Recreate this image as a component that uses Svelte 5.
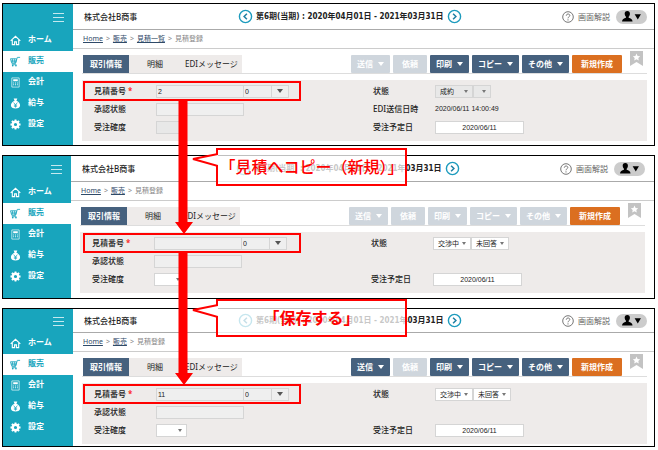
<script>
  const nav = [
    { icon: 'home', label: 'ホーム' },
    { icon: 'cart', label: '販売', current: true },
    { icon: 'calc', label: '会計' },
    { icon: 'pay', label: '給与' },
    { icon: 'gear', label: '設定' }
  ];

  const actions = [
    { key: 'send', label: '送信', caret: true },
    { key: 'request', label: '依頼' },
    { key: 'print', label: '印刷', caret: true },
    { key: 'copy', label: 'コピー', caret: true },
    { key: 'other', label: 'その他', caret: true },
    { key: 'new', label: '新規作成' }
  ];

  const steps = [
    {
      id: 's1',
      crumbs: ['Home', '販売', '見積一覧'],
      off: ['send', 'request'],
      number: '2',
      status: ['成約', ''],
      statusOff: true,
      sentAt: '2020/06/11 14:00:49'
    },
    {
      id: 's2',
      crumbs: ['Home', '販売'],
      off: ['send', 'request', 'print', 'copy', 'other'],
      number: '',
      status: ['交渉中', '未回答']
    },
    {
      id: 's3',
      crumbs: ['Home', '販売'],
      off: ['request'],
      number: '11',
      status: ['交渉中', '未回答']
    }
  ];
</script>

{#snippet navIcon(name)}
  <svg class="nav-icon" viewBox="0 0 24 24" aria-hidden="true">
    {#if name === 'home'}
      <path d="M1.5 13 12 3l10.500 10M5 11v10h5v-6h4v6h5V11" fill="none" stroke="currentColor" stroke-width="2.4" />
    {:else if name === 'cart'}
      <path d="M1 6h13l-2 10H4zM5 6l1.500 10M9.500 6v10M2 11h12M12 16l4-13h6M4 19h10" fill="none" stroke="currentColor" stroke-width="1.800" />
      <circle cx="6" cy="21" r="1.800" fill="currentColor" />
      <circle cx="13" cy="21" r="1.800" fill="currentColor" />
    {:else if name === 'calc'}
      <path d="M4 2h16v20H4z" fill="none" stroke="currentColor" stroke-width="1.800" opacity="0.8" />
      <path d="M7 5h10v4H7zM7 12h2v2H7zM11 12h2v2h-2zM15 12h2v2h-2zM7 16h2v2H7zM11 16h2v2h-2zM15 16h2v2h-2z" fill="currentColor" />
    {:else if name === 'pay'}
      <path d="M8 1h8l-2 5c5 2 8 6 8 10 0 5-4 7-10 7S2 21 2 16c0-4 3-8 8-10z" fill="currentColor" />
      <path d="m8 10 4 5 4-5M12 15v6M8.500 15.500h7M8.500 18h7" fill="none" stroke="#18a5bd" stroke-width="1.600" />
    {:else}
      <circle cx="12" cy="12" r="6" fill="none" stroke="currentColor" stroke-width="5" />
      <path d="M12 1v5M12 18v5M1 12h5M18 12h5M4.200 4.200l3.500 3.500M16.300 16.300l3.500 3.500M4.200 19.800l3.500-3.500M16.300 7.700l3.500-3.500" stroke="currentColor" stroke-width="4" />
    {/if}
  </svg>
{/snippet}

{#snippet arrow(dir)}
  <svg viewBox="0 0 16 16" aria-hidden="true">
    <circle cx="8" cy="8" r="6.500" fill="#fff" stroke="#1d9bbd" stroke-width="1.500" />
    <path d={dir === 'prev' ? 'M9.500 5 6.500 8l3 3' : 'M6.500 5l3 3-3 3'} fill="none" stroke="#1d7fa3" stroke-width="1.600" />
  </svg>
{/snippet}

<main>
  {#each steps as step}
    <section class="step {step.id}">
      <nav>
        <div class="nav-head">
          <button class="menu" aria-label="menu"><i></i><i></i><i></i></button>
        </div>
        {#each nav as item}
          <a class="nav-item" class:current={item.current} href="#{item.icon}">
            {@render navIcon(item.icon)}
            <span>{item.label}</span>
          </a>
        {/each}
      </nav>

      <div class="content">
        <header>
          <span class="company">株式会社B商事</span>
          <div class="period">
            <button class="round" aria-label="prev">{@render arrow('prev')}</button>
            <b>第6期(当期) : 2020年04月01日 - 2021年03月31日</b>
            <button class="round" aria-label="next">{@render arrow('next')}</button>
          </div>
          <a class="help" href="#help">
            <svg viewBox="0 0 12 12" aria-hidden="true">
              <circle cx="6" cy="6" r="5.300" fill="none" stroke="#777" />
              <path d="M4.300 4.700c0-2.300 3.500-2.200 3.500-.2 0 1.300-1.800 1.300-1.800 2.800M6 8.300v1.200" fill="none" stroke="#777" />
            </svg>
            画面解説
          </a>
          <button class="user" aria-label="user">
            <svg viewBox="0 0 20 12" aria-hidden="true">
              <path d="M6 1c1.700 0 2.600 1.200 2.500 2.800C8.400 5 8 5.800 7.300 6.400v1c1.800.6 3.700 1.100 3.700 3.600H1c0-2.500 1.900-3 3.700-3.600v-1C4 5.800 3.600 5 3.500 3.800 3.400 2.200 4.300 1 6 1zM13 4h6l-3 5z" />
            </svg>
          </button>
        </header>

        <div class="crumbs">
          {#each step.crumbs as crumb}
            <a href="#{crumb}">{crumb}</a><span>&gt;</span>
          {/each}
          <span>見積登録</span>
        </div>

        <div class="body">
          <div class="bar">
            <div class="tabs">
              <button class="tab active">取引情報</button>
              <button class="tab">明細</button>
              <button class="tab">EDIメッセージ</button>
            </div>
            <div class="actions">
              {#each actions as action}
                <button class="action {action.key}" disabled={step.off.includes(action.key)}>
                  {action.label}
                  {#if action.caret}<i class="caret"></i>{/if}
                </button>
              {/each}
              <svg class="bookmark" viewBox="0 0 13 15" aria-hidden="true">
                <path d="M0 0h13v15l-6.500-4L0 15z" fill="#c3c3c3" />
                <path d="m6.500 2.500 1.100 2.400 2.600.3-1.900 1.800.5 2.600-2.300-1.300-2.300 1.300.5-2.600-1.900-1.800 2.600-.3z" fill="#fff" />
              </svg>
            </div>
          </div>

          <form>
            <div class="column">
              <div class="row">
                <label for="{step.id}-no">見積番号<em>*</em></label>
                <input id="{step.id}-no" class="long" value={step.number} readonly />
                <input class="branch" aria-label="branch" value="0" readonly />
                <button type="button" class="drop" aria-label="open"><i class="caret"></i></button>
              </div>
              <div class="row">
                <label for="{step.id}-ap">承認状態</label>
                <input id="{step.id}-ap" class="long" readonly />
              </div>
              <div class="row">
                <label for="{step.id}-pr">受注確度</label>
                <span class="pick" class:bare={step.statusOff}>
                  <select id="{step.id}-pr" class="rate" disabled={step.statusOff}><option></option></select>
                </span>
              </div>
            </div>
            <div class="column">
              <div class="row">
                <label for="{step.id}-st">状態</label>
                {#each step.status as value, i}
                  <span class="pick">
                    <select id={i ? null : step.id + '-st'} aria-label="status" class:tiny={!value} disabled={step.statusOff}>
                      <option>{value}</option>
                    </select>
                  </span>
                {/each}
              </div>
              <div class="row">
                {#if step.sentAt}
                  <span class="name">EDI送信日時</span>
                  <span class="time">{step.sentAt}</span>
                {/if}
              </div>
              <div class="row">
                <label for="{step.id}-dt">受注予定日</label>
                <input id="{step.id}-dt" class="date" value="2020/06/11" />
              </div>
            </div>
          </form>
        </div>
      </div>
    </section>
  {/each}

  <!-- flow annotations drawn over the screens -->
  <div class="mark mark1"></div>
  <div class="mark mark2"></div>
  <div class="mark mark3"></div>
  {#each ['1', '2'] as n}
    <svg class="flow flow{n}" viewBox="0 0 20 134" aria-hidden="true">
      <path d="M4.500 0h9v122H19l-9 12-9-12h3.500z" fill="#f00" />
    </svg>
    <div class="callout callout{n}">
      <svg viewBox="0 0 26 14" aria-hidden="true">
        <path d="M26 1 1 6l25 7" fill="#fff" stroke="#f00" stroke-width="2" />
      </svg>
      {n === '1' ? '「見積へコピー（新規）」' : '「保存する」'}
    </div>
  {/each}
</main>

<style>
  :global(body) {
    background: #fff;
  }

  main {
    position: relative;
    display: flex;
    flex-direction: column;
    gap: 9px;
    padding: 3px 3px 3px 2px;
    font: 8px/12px 'Noto Sans', 'Noto Sans CJK JP', sans-serif;
    color: #222;
  }

  button, input, select {
    box-sizing: border-box;
    margin: 0;
    padding: 0;
    border: 0;
    border-radius: 0;
    font: inherit;
    color: inherit;
    background: none;
  }

  a {
    color: inherit;
    text-decoration: none;
  }

  svg {
    display: block;
  }

  .step {
    --head: 26px;
    --side: 70px;
    --right: 7px;
    --bottom: 4px;
    display: grid;
    grid-template-columns: var(--side) 1fr;
    border: 1px solid #000;
    background: #fff;
  }

  .s2 {
    --side: 68px;
    --right: 9px;
    --bottom: 5px;
  }

  .s3 {
    --head: 24px;
    --bottom: 2px;
  }

  nav {
    background: #18a5bd;
    color: #fff;
    font-weight: bold;
  }

  .nav-head {
    display: flex;
    align-items: center;
    justify-content: flex-end;
    height: var(--head);
    padding-right: 9px;
  }

  .menu {
    display: flex;
    flex-direction: column;
    gap: 3px;
    width: 11px;
  }

  .menu i {
    height: 1px;
    background: #c5e9ef;
  }

  .nav-item {
    display: flex;
    align-items: center;
    gap: 7px;
    height: 21px;
    padding-left: 7px;
  }

  .nav-item span {
    padding-bottom: 4px;
  }

  .current {
    background: #fff;
    color: #18a5bd;
  }

  .nav-icon {
    width: 11px;
    height: 11px;
  }

  header {
    box-sizing: border-box;
    display: flex;
    align-items: center;
    height: var(--head);
    padding: 0 var(--right) 0 11px;
    border-bottom: 1px solid #aaa;
  }

  .company {
    width: 154px;
    font-weight: 500;
  }

  .period {
    display: flex;
    align-items: center;
    gap: 3px;
    font-family: 'DejaVu Sans Condensed', 'Noto Sans CJK JP', sans-serif;
    white-space: nowrap;
  }

  .round, .round svg {
    width: 15px;
    height: 15px;
  }

  .help {
    display: flex;
    align-items: center;
    gap: 4px;
    margin-left: auto;
    color: #666;
  }

  .help svg {
    width: 12px;
    height: 12px;
  }

  .user {
    width: 31px;
    height: 14px;
    margin-left: 6px;
    padding: 0 5px;
    border-radius: 7px;
    background: #ccc;
  }

  .crumbs {
    box-sizing: border-box;
    display: flex;
    align-items: center;
    gap: 3px;
    height: 19px;
    padding-left: 10px;
    border-bottom: 1px solid #ccc;
    font-size: 7px;
    color: #888;
  }

  .crumbs a {
    color: #2f4a68;
    text-decoration: underline;
  }

  .body {
    padding: 6px var(--right) var(--bottom) 9px;
  }

  .bar {
    display: flex;
    justify-content: space-between;
    height: 18px;
    margin-bottom: 6px;
    padding: 0 4px 0 1px;
    border-bottom: 1px solid #ddd;
  }

  .tabs {
    display: flex;
  }

  .tab {
    padding: 0 18px;
    background: #eeebea;
    white-space: nowrap;
  }

  .tab:last-child {
    padding: 0 4px;
  }

  .active {
    padding: 0 7px;
    background: #46617e;
    color: #fff;
    font-weight: bold;
  }

  .actions {
    display: flex;
    gap: 3px;
  }

  .action {
    display: flex;
    align-items: center;
    gap: 5px;
    padding: 0 6px;
    border-radius: 1px;
    background: #46617e;
    color: #fff;
    font-weight: bold;
    white-space: nowrap;
  }

  .action:disabled {
    background: #cfd6dd;
  }

  .request, .new {
    padding: 0 9px;
  }

  .new {
    background: #db6f20;
  }

  .caret {
    border: 3px solid transparent;
    border-top: 4px solid currentColor;
    border-bottom: 0;
  }

  .bookmark {
    width: 13px;
    height: 15px;
    margin: -4px 0 0 5px;
  }

  form {
    display: grid;
    grid-template-columns: 279px 1fr;
    padding: 2px 0 5px 12px;
    background: #eeebea;
  }

  .row {
    display: flex;
    align-items: center;
    height: 18px;
  }

  label, .name {
    width: 62px;
    font-weight: 500;
    white-space: nowrap;
  }

  em {
    margin-left: 2px;
    color: #f00;
    font-style: normal;
  }

  input, select, .drop {
    height: 13px;
    border: 1px solid #d5d5d5;
    background: #efefef;
    font: 7px/11px 'Liberation Sans', 'Noto Sans CJK JP', sans-serif;
  }

  input {
    padding: 0 1px;
  }

  .long {
    width: 88px;
  }

  .branch {
    width: 28px;
    border-left: 0;
  }

  .drop {
    display: flex;
    align-items: center;
    justify-content: center;
    width: 17px;
    border-left: 0;
    color: #555;
  }

  .date {
    width: 89px;
    background: #fff;
    text-align: center;
  }

  .time {
    font: 7px/12px 'Liberation Sans', sans-serif;
  }

  .pick {
    position: relative;
  }

  .pick::after {
    content: '';
    position: absolute;
    top: 5px;
    right: 5px;
    border: 2px solid transparent;
    border-top: 3px solid #777;
    border-bottom: 0;
  }

  .bare::after {
    display: none;
  }

  select {
    display: block;
    width: 38px;
    padding-left: 4px;
    appearance: none;
    background: #fff;
    color: #222;
    opacity: 1;
  }

  select:disabled {
    background: #e8e8e8;
  }

  .rate {
    width: 31px;
  }

  .rate:disabled {
    width: 26px;
  }

  .tiny {
    width: 18px;
  }

  .mark, .flow, .callout {
    position: absolute;
    box-sizing: border-box;
  }

  .mark {
    left: 83px;
    width: 218px;
    height: 20px;
    border: 2px solid #f00;
  }

  .mark1 { top: 81px; }
  .mark2 { top: 233px; }
  .mark3 { top: 384px; }

  .flow {
    left: 174px;
    width: 20px;
    height: 134px;
  }

  .flow1 { top: 100px; }
  .flow2 { top: 251px; }

  .callout {
    left: 216px;
    width: 191px;
    height: 38px;
    border: 2px solid #f00;
    background: rgba(255, 255, 255, 0.75);
    color: #f00;
    font-size: 16px;
    font-weight: 500;
    line-height: 34px;
    text-align: center;
    white-space: nowrap;
  }

  .callout svg {
    position: absolute;
    top: 3px;
    left: -26px;
    width: 26px;
    height: 14px;
  }

  .callout1 { top: 148px; }

  .callout2 {
    top: 299px;
    font-weight: bold;
  }
</style>
